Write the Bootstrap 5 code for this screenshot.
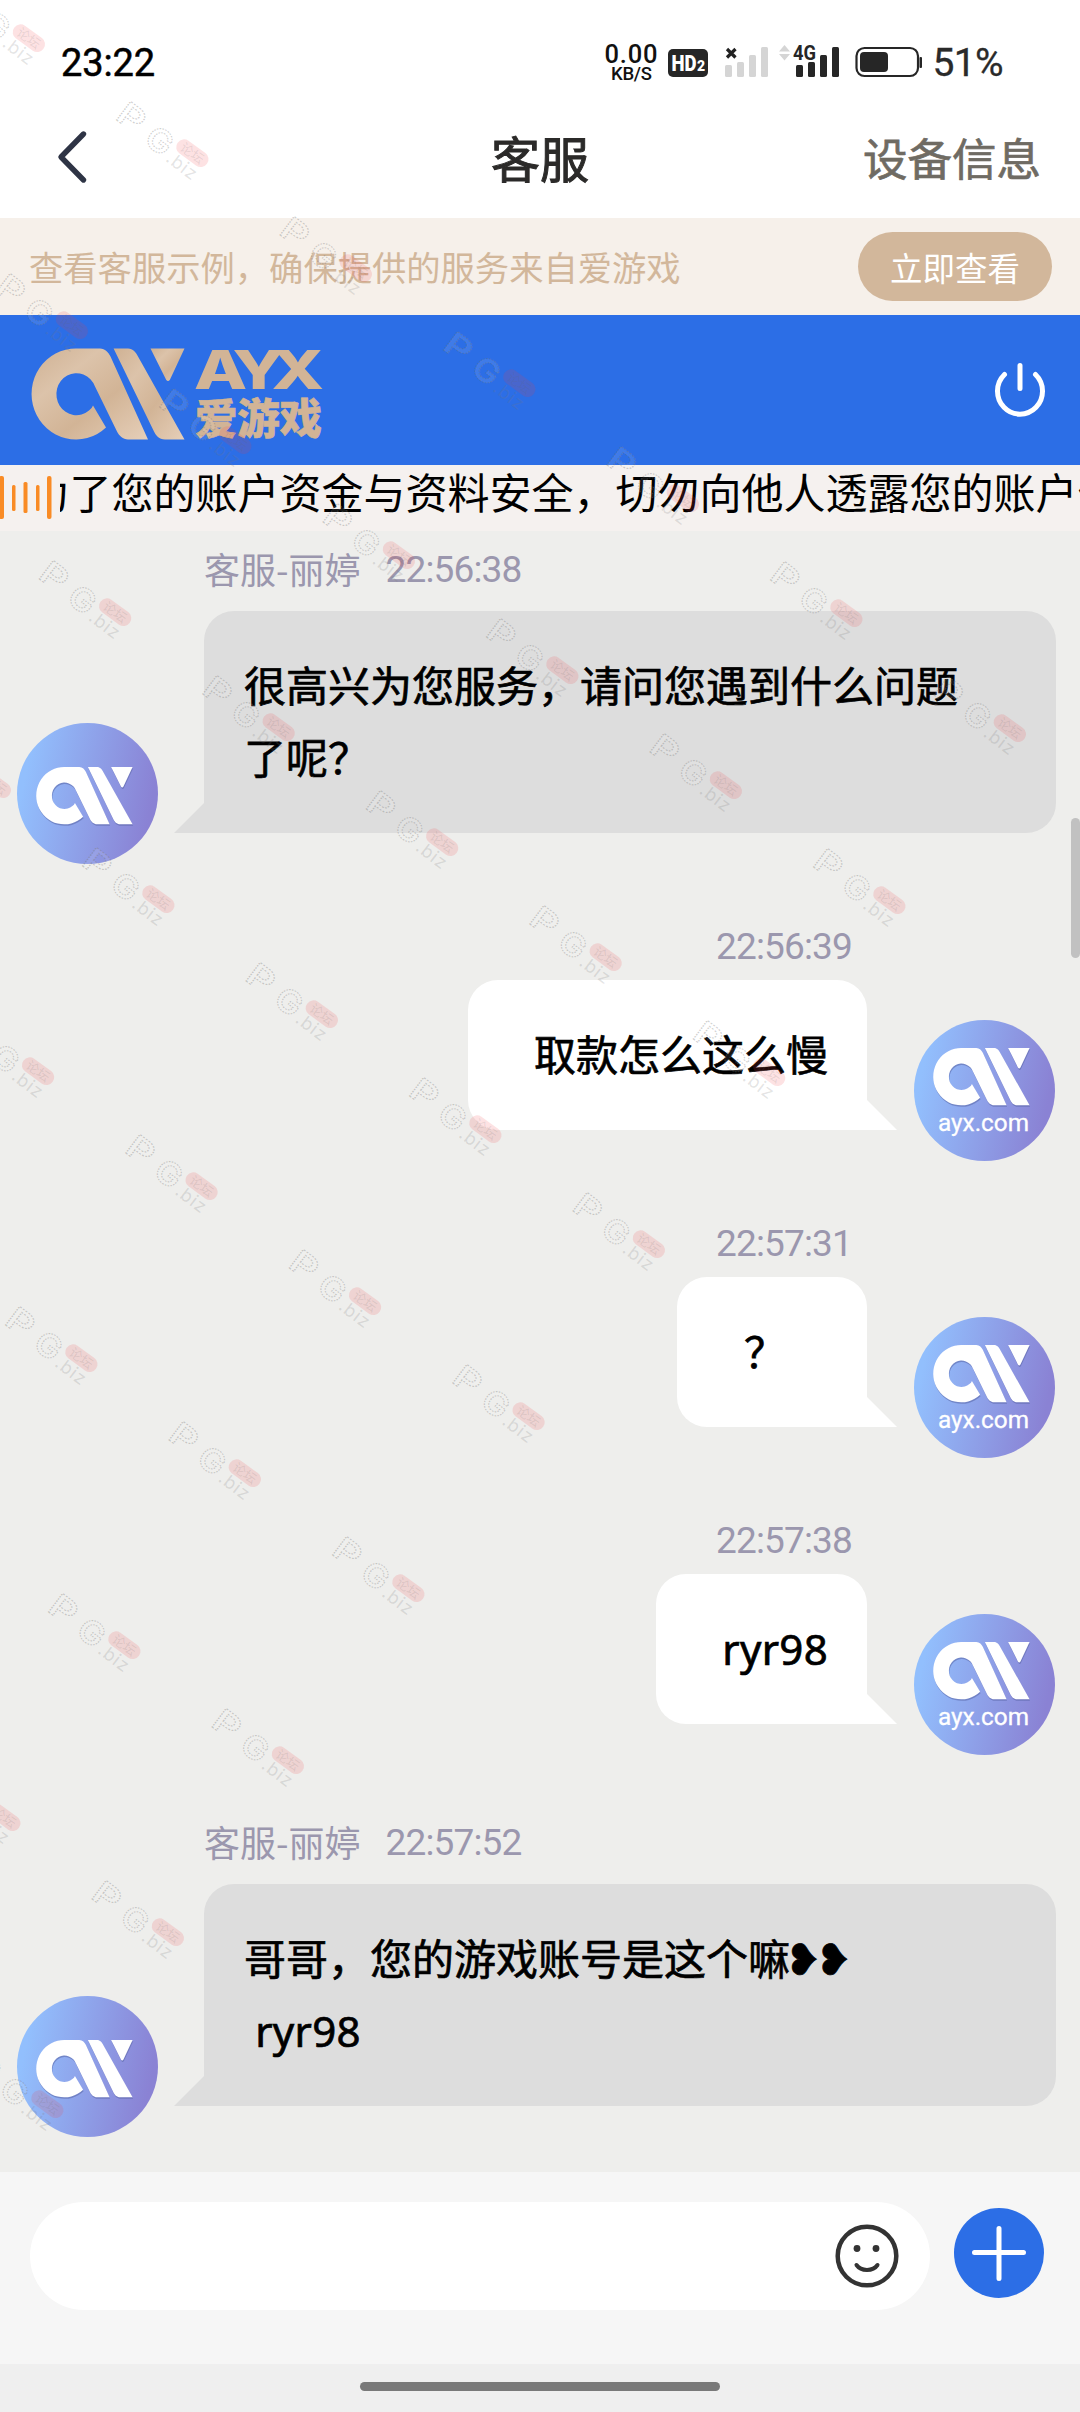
<!DOCTYPE html>
<html lang="zh-CN">
<head>
<meta charset="utf-8">
<meta name="viewport" content="width=device-width, initial-scale=1">
<title>客服</title>
<link href="https://cdn.jsdelivr.net/npm/bootstrap@5.3.0/dist/css/bootstrap.min.css" rel="stylesheet">
<style>
:root{--blue:#2c6ee6;--sand:#d2b79b;--cream:#f6f0ea}
body{width:1080px;height:2412px;font-family:"Noto Sans CJK SC",sans-serif;color:#000;overflow:hidden;background:#fff}
.latin{font-family:Roboto,"Noto Sans",sans-serif}
.status-row{height:98px;padding:26px 77px 0 61px}
.clock{font-size:38px;line-height:75px;height:76px;letter-spacing:-.1px;-webkit-text-stroke:.5px #000}
.percent{font-size:39px;line-height:74px;height:76px;color:#2a2a2a;margin-left:8px;letter-spacing:-.6px;-webkit-text-stroke:.3px #2a2a2a}
.title-row{height:120px;padding:0 39px 3px 57px}
.title-text{font-size:49px;line-height:72px;color:#2b2a29;-webkit-text-stroke:1px #2b2a29}
.device-link{font-size:44.5px;line-height:72px;color:#6f6b63;-webkit-text-stroke:.7px #6f6b63}
.side{flex:0 0 434px}
.side-end{flex:1 1 0}
.tip-bar{height:97px;background:var(--cream);padding:0 28px 0 29px}
.tip-text{font-size:34.3px;color:var(--sand);line-height:50px;padding-bottom:2px}
.tip-btn{width:194px;height:69px;background:var(--sand);color:#fff;font-size:32.5px;line-height:65px;padding:0;border:0}
.brand-bar{height:150px;background:var(--blue);padding:0 32px 0 30px}
.notice-bar{height:66px;background:#f5f1ef;overflow:hidden}
.notice-clip{margin-left:8px;flex:1 1 0;overflow:hidden;min-width:0}
.notice-text{font-size:42px;line-height:52px;white-space:nowrap;margin-left:-32.5px}
.chat{height:1641px;background:#eeeeec;padding:18px 0 0}
.stamp{color:#9b97ae;font-size:36px;line-height:38px;height:42px}
.stamp .latin{font-size:37px;letter-spacing:-.85px;line-height:41px}
.in-stamp{padding-left:204px;margin-bottom:20px}
.in-stamp .latin{margin-left:25px}
.out-stamp{padding-right:228px;margin-bottom:14px}
.out-stamp .latin{line-height:37px;display:inline-block}
.in-line{padding-left:16.5px;padding-right:24px}
.out-line{padding-right:25px}
.bubble{position:relative;border-radius:30px;margin-bottom:31px;font-size:42px;line-height:72px;-webkit-text-stroke:.7px #000}
.bubble::after{content:"";position:absolute;bottom:0;width:30px;height:30px}
.bubble-in{background:#ddd;flex:1 1 0;margin-left:46.5px;padding:37px 40px;height:222px;border-bottom-left-radius:0}
.bubble-in::after{right:100%;background:#ddd;clip-path:polygon(100% 0,100% 100%,0 100%)}
.bubble-out{background:#fff;margin-right:47px;padding:37px 39px 41px 66px;height:150px;border-bottom-right-radius:0}
.bubble-out::after{left:100%;background:#fff;clip-path:polygon(0 0,100% 100%,0 100%)}
.bubble-ask{width:190px;padding-left:67px}
.word{font-family:"Noto Sans",sans-serif;line-height:1;letter-spacing:.3px}
.hearts{font-family:"DejaVu Sans",sans-serif;font-size:43px;line-height:1;letter-spacing:-5.600px;margin-left:-5px;-webkit-text-stroke:.8px #000}
.gap-row{margin-top:60px}
.gap-wide{margin-top:67px}
.avatar{width:141px;height:141px;flex:none}
.composer{height:192px;background:#f6f6f6;padding:30px 36px 0 30px}
.field{width:900px;height:108px;padding-right:31px}
.plus-btn{width:90px;height:90px;background:var(--blue);margin-top:6px;border:0;padding:0}
.home-strip{height:48px;background:#efefef;padding-top:18px}
.home-pill{width:360px;height:9px;background:#797979}
.scroll-thumb{position:absolute;right:0;top:818px;width:9px;height:140px;border-radius:5px;background:#c1c1c1}
.watermark{position:absolute;left:0;top:0;pointer-events:none}
svg{display:block}
</style>
</head>
<body class="position-relative">

<svg width="0" height="0" class="position-absolute">
  <defs>
    <linearGradient id="gold" x1="0" y1="0" x2="1" y2="1"><stop offset="0" stop-color="#cfb193"/><stop offset=".3" stop-color="#dcc3aa"/><stop offset=".6" stop-color="#d2b496"/><stop offset="1" stop-color="#e6cfb9"/></linearGradient>
    <linearGradient id="sky" x1="0" y1=".4" x2="1" y2=".6"><stop offset=".05" stop-color="#92bffd"/><stop offset=".95" stop-color="#8a82d4"/></linearGradient>
    <g id="ax">
      <path d="M44.4 0H68C73 0 76.500 4 78.500 8L116 91H96C91 91 87 87 85 83L63 38A20 21 0 1 0 57 62Q60 60 61 57L74 79A44.400 45.500 0 1 1 44.400 0Z"/>
      <path d="M81.600 0H96C101 0 104 4 106 8L152.500 91H133C127 91 124 87 122 83Z"/>
      <path d="M118.500 0H152.500L138 31Q136 34 134 31Z"/>
    </g>
    <g id="face">
      <circle cx="70.500" cy="70.500" r="70.500" fill="url(#sky)"/>
    </g>
    <g id="wm">
      <g font-family="Inter, sans-serif" font-weight="600" text-anchor="middle">
        <g fill="#fff" fill-opacity=".1" stroke="#777" stroke-opacity=".36" stroke-width="1.100" stroke-dasharray="1.500 1.200">
          <text transform="translate(18 14.500) rotate(37) scale(1.280 1)" x="0" y="11" font-size="32">P</text>
          <text transform="translate(46 38) rotate(37) scale(1.080 1)" x="0" y="11" font-size="32">G</text>
        </g>
        <text transform="translate(68 64) rotate(37)" x="0" y="5" font-size="18" font-weight="400" fill="#777" fill-opacity=".2" letter-spacing="1">.biz</text>
      </g>
      <g transform="translate(79 50) rotate(36)">
        <rect x="-18" y="-7.500" width="36" height="15.500" rx="7.500" fill="#f03c46" fill-opacity=".15"/>
        <text x="0" y="5" text-anchor="middle" font-size="13" font-family="Noto Sans CJK SC, sans-serif" fill="#666" fill-opacity=".15">论坛</text>
      </g>
    </g>
    <g id="wmrow">
      <use href="#wm" x="-411" y="504"/><use href="#wm" x="-247.500" y="619"/><use href="#wm" x="-84" y="734"/><use href="#wm" x="79.500" y="849"/><use href="#wm" x="243" y="964"/><use href="#wm" x="406.500" y="1079"/><use href="#wm" x="570" y="1194"/>
    </g>
  </defs>
</svg>

<header>
  <div class="status-row d-flex align-items-start">
    <div class="clock latin me-auto">23:22</div>
    <svg width="325" height="54" viewBox="600 26 325 54" style="overflow:visible">
      <g font-family="Roboto, sans-serif" font-weight="500" fill="#111">
        <text x="605.500" y="62.500" font-size="25.500" textLength="53">0.00</text>
        <text x="612" y="80" font-size="18.500" textLength="41">KB/S</text>
      </g>
      <rect x="669" y="49" width="40" height="28" rx="5" fill="#262626"/>
      <text x="672.500" y="71" font-family="Roboto, sans-serif" font-weight="900" font-size="22" fill="#fff" textLength="25" lengthAdjust="spacingAndGlyphs">HD</text>
      <text x="698" y="71" font-family="Roboto, sans-serif" font-weight="900" font-size="14" fill="#fff">2</text>
      <path d="M728 49l8.500 8.500M736.500 49l-8.500 8.500" stroke="#222" stroke-width="3.200"/>
      <g fill="#d5d5d5">
        <rect x="726" y="65" width="7" height="12" rx="1.500"/><rect x="738" y="62" width="7" height="15" rx="1.500"/><rect x="750" y="55" width="7" height="22" rx="1.500"/><rect x="762" y="47" width="7" height="30" rx="1.500"/>
        <path d="M780 51.500l5.500-6.500 5.500 6.500zM780 54l5.500 6.500L791 54z"/>
      </g>
      <g fill="#262626">
        <rect x="797" y="65" width="7" height="12" rx="1.500"/><rect x="809" y="62" width="7" height="15" rx="1.500"/><rect x="821" y="55" width="7" height="22" rx="1.500"/><rect x="833" y="47" width="7" height="30" rx="1.500"/>
        <text x="794" y="60" font-family="Roboto, sans-serif" font-weight="700" font-size="20" textLength="23" lengthAdjust="spacingAndGlyphs">4G</text>
        <rect x="861" y="52" width="28" height="20" rx="4"/><rect x="920.500" y="57" width="2.500" height="11" rx="1"/>
      </g>
      <rect x="857.500" y="48" width="61.500" height="28" rx="8" fill="none" stroke="#262626" stroke-width="2.200"/>
    </svg>
    <div class="percent latin">51%</div>
  </div>
  <div class="title-row d-flex align-items-center">
    <div class="side">
      <svg width="32" height="54" viewBox="0 0 32 54"><path d="M26.500 4L4 27l22.500 23" fill="none" stroke="#2e3445" stroke-width="5.400" stroke-linecap="round" stroke-linejoin="round"/></svg>
    </div>
    <div class="title-text">客服</div>
    <div class="side-end text-end device-link">设备信息</div>
  </div>
</header>

<section class="tip-bar d-flex align-items-center justify-content-between">
  <span class="tip-text">查看客服示例，确保提供的服务来自爱游戏</span>
  <button class="btn tip-btn rounded-pill">立即查看</button>
</section>

<nav class="brand-bar d-flex align-items-center justify-content-between">
  <svg width="300" height="100" viewBox="30 340 300 100" style="overflow:visible">
    <use href="#ax" x="32" y="348.500" fill="url(#gold)"/>
    <text transform="translate(194 388.500) scale(1.280 1)" x="0 30 60.500" y="0" font-family="Inter, sans-serif" font-weight="800" font-size="54" fill="#d2b496">AYX</text>
    <text x="195" y="434" font-family="Noto Sans CJK SC, sans-serif" font-weight="900" font-size="42.500" fill="#d2b496" stroke="#d2b496" stroke-width=".6" textLength="127">爱游戏</text>
  </svg>
  <svg width="56" height="60" viewBox="992 360 56 60"><g fill="none" stroke="#fff" stroke-width="5" stroke-linecap="round"><path d="M1020 365.500v23M1004.500 374.500A22.500 23 0 1 0 1035.500 374.500"/></g></svg>
</nav>

<section class="notice-bar d-flex">
  <svg class="flex-shrink-0" width="52" height="66" viewBox="0 465 52 66"><g fill="#f98b25"><rect x="-1" y="476" width="5" height="43" rx="2"/><rect x="12" y="485" width="3.500" height="26" rx="1.500"/><rect x="23.500" y="482" width="4" height="31" rx="1.500"/><rect x="36" y="485" width="3.500" height="26" rx="1.500"/><rect x="47" y="476" width="4.500" height="43" rx="2"/></g></svg>
  <div class="notice-clip"><div class="notice-text">为了您的账户资金与资料安全，切勿向他人透露您的账户信</div></div>
</section>

<main class="chat">
  <article>
    <div class="stamp in-stamp d-flex"><span>客服-丽婷</span><span class="latin">22:56:38</span></div>
    <div class="in-line d-flex align-items-end">
      <svg class="avatar" viewBox="0 0 141 141"><use href="#face"/><use href="#ax" transform="translate(20 45.500) scale(.63)" fill="#5460a0" fill-opacity=".5"/><use href="#ax" transform="translate(19.500 44) scale(.63)" fill="#fff"/></svg>
      <div class="bubble bubble-in">很高兴为您服务，请问您遇到什么问题<br>了呢？</div>
    </div>
  </article>
  <article class="gap-row">
    <div class="stamp out-stamp text-end"><span class="latin">22:56:39</span></div>
    <div class="out-line d-flex align-items-end justify-content-end">
      <div class="bubble bubble-out">取款怎么这么慢</div>
      <svg class="avatar" viewBox="0 0 141 141"><use href="#face"/><use href="#ax" transform="translate(20 29.500) scale(.63)" fill="#5460a0" fill-opacity=".5"/><use href="#ax" transform="translate(19.500 28) scale(.63)" fill="#fff"/><text x="24" y="110.500" font-family="Roboto, sans-serif" font-size="24" fill="#fff" stroke="#fff" stroke-width=".3" textLength="91" lengthAdjust="spacingAndGlyphs">ayx.com</text></svg>
    </div>
  </article>
  <article class="gap-row">
    <div class="stamp out-stamp text-end"><span class="latin">22:57:31</span></div>
    <div class="out-line d-flex align-items-end justify-content-end">
      <div class="bubble bubble-out bubble-ask">？</div>
      <svg class="avatar" viewBox="0 0 141 141"><use href="#face"/><use href="#ax" transform="translate(20 29.500) scale(.63)" fill="#5460a0" fill-opacity=".5"/><use href="#ax" transform="translate(19.500 28) scale(.63)" fill="#fff"/><text x="24" y="110.500" font-family="Roboto, sans-serif" font-size="24" fill="#fff" stroke="#fff" stroke-width=".3" textLength="91" lengthAdjust="spacingAndGlyphs">ayx.com</text></svg>
    </div>
  </article>
  <article class="gap-row">
    <div class="stamp out-stamp text-end"><span class="latin">22:57:38</span></div>
    <div class="out-line d-flex align-items-end justify-content-end">
      <div class="bubble bubble-out"><span class="word">ryr98</span></div>
      <svg class="avatar" viewBox="0 0 141 141"><use href="#face"/><use href="#ax" transform="translate(20 29.500) scale(.63)" fill="#5460a0" fill-opacity=".5"/><use href="#ax" transform="translate(19.500 28) scale(.63)" fill="#fff"/><text x="24" y="110.500" font-family="Roboto, sans-serif" font-size="24" fill="#fff" stroke="#fff" stroke-width=".3" textLength="91" lengthAdjust="spacingAndGlyphs">ayx.com</text></svg>
    </div>
  </article>
  <article class="gap-wide">
    <div class="stamp in-stamp d-flex"><span>客服-丽婷</span><span class="latin">22:57:52</span></div>
    <div class="in-line d-flex align-items-end">
      <svg class="avatar" viewBox="0 0 141 141"><use href="#face"/><use href="#ax" transform="translate(20 45.500) scale(.63)" fill="#5460a0" fill-opacity=".5"/><use href="#ax" transform="translate(19.500 44) scale(.63)" fill="#fff"/></svg>
      <div class="bubble bubble-in">哥哥，您的游戏账号是这个嘛<span class="hearts">❥❥</span><br><span class="word">&nbsp;ryr98</span></div>
    </div>
  </article>
</main>

<footer>
  <div class="composer d-flex align-items-start justify-content-between">
    <div class="field bg-white rounded-pill d-flex align-items-center justify-content-end">
      <svg width="64" height="64" viewBox="0 0 64 64"><circle cx="32" cy="32" r="29.300" fill="none" stroke="#333" stroke-width="4.500"/><circle cx="22" cy="24.500" r="3.400" fill="#333"/><circle cx="41" cy="24.500" r="3.400" fill="#333"/><path d="M21.500 41C26 47.500 38 47.500 42.500 41" fill="none" stroke="#333" stroke-width="4" stroke-linecap="round"/></svg>
    </div>
    <button class="btn plus-btn rounded-circle"><svg width="90" height="90" viewBox="0 0 90 90"><path d="M20.500 44.500h49M45 20.500v50" stroke="#fff" stroke-width="5" stroke-linecap="round"/></svg></button>
  </div>
  <div class="home-strip d-flex align-items-start justify-content-center"><div class="home-pill rounded-pill"></div></div>
</footer>

<div class="scroll-thumb"></div>

<svg class="watermark" width="1080" height="2412" viewBox="0 0 1080 2412">
  <use href="#wmrow" x="361" y="-516"/><use href="#wmrow" x="240.500" y="-344"/><use href="#wmrow" x="120.300" y="-172"/><use href="#wmrow"/><use href="#wmrow" x="-120.300" y="172"/><use href="#wmrow" x="-240.500" y="344"/><use href="#wmrow" x="-361" y="516"/><use href="#wmrow" x="-481" y="688"/><use href="#wmrow" x="-601.500" y="860"/>
</svg>
<script src="https://cdn.jsdelivr.net/npm/bootstrap@5.3.0/dist/js/bootstrap.bundle.min.js"></script>
</body>
</html>
